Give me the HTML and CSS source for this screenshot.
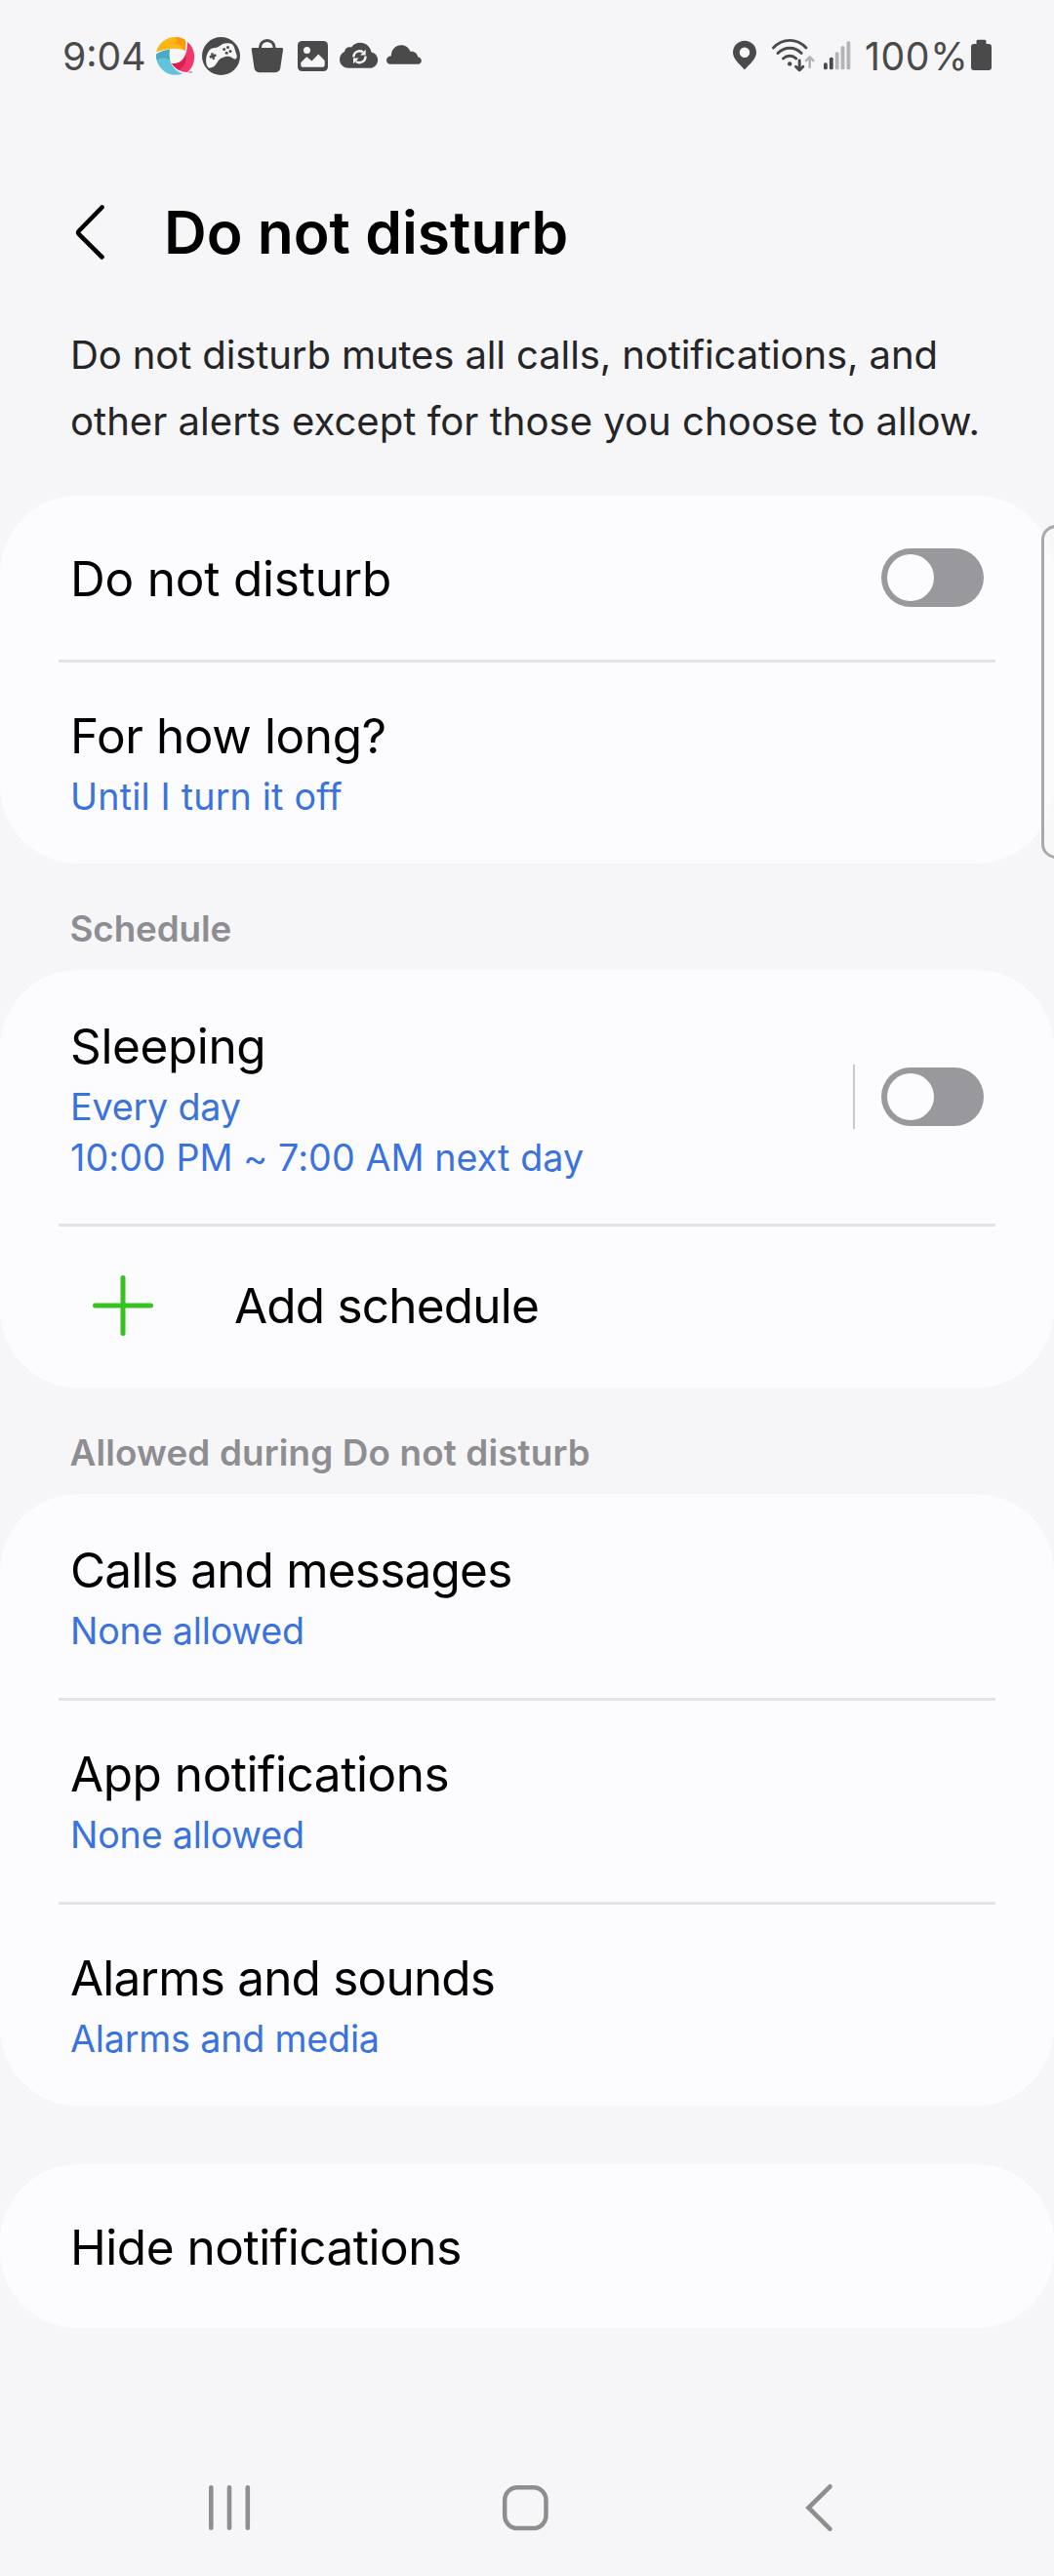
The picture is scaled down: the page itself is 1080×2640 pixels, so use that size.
FILE: index.html
```html
<!DOCTYPE html>
<html lang="en">
<head>
<meta charset="utf-8">
<title>Do not disturb</title>
<link rel="stylesheet" href="styles.css">
</head>
<body>
<div class="screen">
  <div class="status">
    <span class="time">9:04</span>
    <div class="tray">
      <svg class="ic" viewBox="0 0 40 40">
        <path fill="#fbb514" d="M.3 15.5C2 6 10.500 0 19.500 0c4.500 0 8.500 1.500 10.800 3.500L30 14c-5-2-9.500-2.500-14.500-2C10 12.500 4.500 13.500.3 15.500z"/>
        <path fill="#fb9a09" d="M19.500 0c4.500 0 8.500 1.500 10.800 3.500L30 14C27 9 23 7 17 6.500 22 5.500 22 3 19.500 0z"/>
        <path fill="#f0386f" d="M32 5c6 4.500 8.500 13 6.500 20.500C37.500 30 35 33.500 32 36c-6 0-12-3-16-9 7.500.5 12-3 14-9 1.500-4.500 2.300-8.500 2-13z"/>
        <path fill="#d9204f" d="M16 27c7.500.5 12-3 14-9 2 8-2 13-7 15.800C20.500 32.500 18 30 16 27z"/>
        <path fill="#63c3dc" d="M.1 17.500C5 14.500 9.500 13.200 14 12.800 12.500 20 14 27.500 19 32.500c2.500 2.500 5 4 8.500 5C20 40.500 10.500 38.500 5 32 1 27-.4 22.500.1 17.500z"/>
        <path fill="#4aa9c4" d="M.1 17.500C5 14.500 9.500 13.200 14 12.800c-.8 3.500-.8 7 .2 10.500C9 21 5 21 .6 23.500-.1 21-.1 19.500.1 17.500z"/>
        <path fill="#f0386f" d="M33.500 35.500h3.500v1h-3.500z"/>
      </svg>
      <svg class="ic" viewBox="0 0 40 40">
        <circle cx="19.500" cy="19.500" r="19.500" fill="#4a4a4a"/>
        <path fill="#f6f6f8" d="M7.300 31.700C3.500 30 3 21 6.200 15.500 7.500 12.500 10 11 14.500 10.800 18.500 10 20 6 25.500 6.200c4.500 0 6.500 1.300 7.500 4.300l2.700 8.500c.4 2.500-.7 4-2.700 3.500-2.500-1-3.500-2.700-6-2.700-3 0-4.500.5-8 2.200-3.500 2-4.500 9.700-11.700 9.700z"/>
        <path stroke="#4a4a4a" stroke-width="2.400" d="M7.800 20.500l6.600-2M10.100 16.300l2 6.500"/>
        <g fill="#4a4a4a"><circle cx="26.500" cy="10.600" r="1.500"/><circle cx="29" cy="14.500" r="1.500"/><circle cx="22.700" cy="12.500" r="1.500"/><circle cx="25.200" cy="16.300" r="1.500"/></g>
      </svg>
      <svg class="ic" viewBox="0 0 40 40">
        <path fill="none" stroke="#4a4a4a" stroke-width="3" d="M12.500 13v-2.300a7.300 7.300 0 0 1 14.600 0V13"/>
        <path fill="#4a4a4a" d="M5 11h29.800a1.300 1.300 0 0 1 1.300 1.600L33.300 31.500a5 5 0 0 1-5 4.700H11.500a5 5 0 0 1-5-4.700L3.700 12.600A1.300 1.300 0 0 1 5 11z"/>
      </svg>
      <svg class="ic" viewBox="0 0 40 40">
        <rect x="4" y="4" width="31" height="31" rx="4.500" fill="#4a4a4a"/>
        <circle cx="13.500" cy="13.500" r="3.500" fill="#f6f6f8"/>
        <path fill="#f6f6f8" d="M7.300 26l5.900-5.800 5.300 4.300 6.800-7 6.400 6.500v4.500c0 1.500-1 2.300-2.300 2.300H9.600c-1.300 0-2.300-.8-2.300-2.300z"/>
      </svg>
      <svg class="ic" viewBox="0 0 40 40">
        <path fill="#4a4a4a" d="M9.500 31.800C4 31.800 0 28 0 23c0-4 2-6.800 5-8 .5-3.500 3.500-5.500 7-4.500 2-3 5.500-4.700 9-4.700 6 0 10.500 4 11.500 9.700 4 .8 6.600 4 6.600 8 0 4.700-3.700 8.300-8.600 8.300z"/>
        <g fill="none" stroke="#f6f6f8" stroke-width="2.300"><path d="M14.300 20.500a6.200 6.200 0 0 1 9.600-5.200M26.500 19.500a6.200 6.200 0 0 1-9.800 5.500"/></g>
        <path fill="#f6f6f8" d="M26.700 12.800v5.700h-5.700zM14 27.200v-5.700h5.700z"/>
      </svg>
      <svg class="ic" viewBox="0 0 40 40">
        <path fill="#4a4a4a" d="M5 27.800c-2.500 0-4-1.700-4-4 0-2.600 1.800-4.300 4.800-4.600C6 12.500 10.500 8.200 16 8.200c4.500 0 8 2.600 9.500 6.600 4-.6 7.200 1.700 7.700 5.700 2.300.2 3.600 1.600 3.600 3.700s-1.400 3.600-3.600 3.600z"/>
      </svg>
    </div>
    <div class="radio">
      <svg class="pin" viewBox="0 0 24 40"><path fill="#4a4a4a" fill-rule="evenodd" d="M12 3.700a12 12 0 0 1 12 12c0 6.500-6 11-12 17.800C6 26.700 0 22.200 0 15.700a12 12 0 0 1 12-12zm0 6.800a5.200 5.200 0 1 0 0 10.400 5.200 5.200 0 0 0 0-10.400z"/></svg>
      <svg class="wifi" viewBox="0 0 46 40">
        <g fill="none" stroke="#4a4a4a" stroke-width="2.900" stroke-linecap="round" stroke-linejoin="round">
          <path d="M2.400 11C12 .8 26.500.8 36 11M7 16.500c7-7 17.500-7 24.200 0M12.500 22c4-3.700 9.500-3.700 13.300 0"/>
          <path d="M29.200 24v9.500M25.500 30.300l3.700 3.600 3.700-3.600"/>
        </g>
        <circle cx="19.200" cy="27.400" r="2.200" fill="#4a4a4a"/>
        <path fill="none" stroke="#b4b4b6" stroke-width="2.600" stroke-linecap="round" stroke-linejoin="round" d="M39.700 31v-10.500M36 24.200l3.700-3.700 3.700 3.700"/>
      </svg>
      <svg class="signal" viewBox="0 0 28 40">
        <g fill="#4a4a4a"><rect x="0" y="26.300" width="3.800" height="6.900" rx="1.500"/><rect x="5.900" y="20.700" width="3.800" height="12.500" rx="1.500"/></g>
        <g fill="#b4b4b6"><rect x="11.800" y="15.300" width="3.800" height="17.900" rx="1.500"/><rect x="17.600" y="9.300" width="3.800" height="23.900" rx="1.500"/><rect x="23.500" y="4.200" width="3.800" height="29" rx="1.500"/></g>
      </svg>
      <span class="pct">100%</span>
      <svg class="batt" viewBox="0 0 21 40"><path fill="#4a4a4a" d="M7 2.800h7a1.500 1.500 0 0 1 1.500 1.500V7H18a3 3 0 0 1 3 3v21a3 3 0 0 1-3 3H3a3 3 0 0 1-3-3V10a3 3 0 0 1 3-3h2.500V4.300A1.500 1.500 0 0 1 7 2.800z"/></svg>
    </div>
  </div>

  <header class="head">
    <svg class="back" viewBox="0 0 40 60"><path fill="none" stroke="#000" stroke-width="4.600" stroke-linecap="round" stroke-linejoin="round" d="M32.500 4.500L9 28.500Q7.300 30.300 9 32.100L32.500 55.500"/></svg>
    <h1>Do not disturb</h1>
  </header>
  <p class="desc"><span class="line1">Do not disturb mutes all calls, notifications, and</span><br>other alerts except for those you choose to allow.</p>

  <section class="card">
    <div class="row single"><span class="title even">Do not disturb</span><span class="toggle"></span></div>
    <div class="row"><div><div class="title snug">For how long?</div><div class="sub wide">Until I turn it off</div></div></div>
  </section>

  <h2>Schedule</h2>
  <section class="card">
    <div class="row tall"><div><div class="title snug">Sleeping</div><div class="sub"><span class="day">Every day</span><br><span class="hours">10:00 PM ~ 7:00 AM next day</span></div></div><div class="switch"><span class="toggle"></span></div></div>
    <div class="row add">
      <svg class="plus" viewBox="0 0 62 62"><path stroke="#36c21f" stroke-width="5" stroke-linecap="round" d="M31 2.500v57M2.500 31h57"/></svg>
      <span class="title tight">Add schedule</span>
    </div>
  </section>

  <h2 class="spaced">Allowed during Do not disturb</h2>
  <section class="card">
    <div class="row"><div><div class="title tight">Calls and messages</div><div class="sub">None allowed</div></div></div>
    <div class="row"><div><div class="title close">App notifications</div><div class="sub">None allowed</div></div></div>
    <div class="row"><div><div class="title tight">Alarms and sounds</div><div class="sub">Alarms and media</div></div></div>
  </section>

  <section class="card last">
    <div class="row single"><span class="title close">Hide notifications</span></div>
  </section>

  <nav class="nav">
    <svg viewBox="0 0 60 60"><path stroke="#8e8e8e" stroke-width="4.600" stroke-linecap="round" d="M11.300 9.300v41.400M30 9.300v41.400M48.800 9.300v41.400"/></svg>
    <svg viewBox="0 0 60 60"><rect x="9.200" y="9.200" width="42.300" height="41.900" rx="13" fill="none" stroke="#8e8e8e" stroke-width="4.500"/></svg>
    <svg viewBox="0 0 60 60"><path fill="none" stroke="#8e8e8e" stroke-width="4.600" stroke-linecap="round" d="M40.500 8.300L18.500 30l22 21.800"/></svg>
  </nav>
  <div class="edge"></div>
</div>
</body>
</html>
```
FILE: styles.css
```css
* { box-sizing: border-box; }
body {
  margin: 0;
  background: #f6f6f8;
  color: #000;
  font-family: Inter, "Liberation Sans", sans-serif;
}
svg { display: block; flex: none; }
.screen {
  position: relative;
  width: 1080px;
  height: 2640px;
  overflow: hidden;
  display: flex;
  flex-direction: column;
}

/* status bar */
.status {
  height: 78px;
  padding: 38px 64px 0 64px;
  display: flex;
  color: #4a4a4a;
  font-size: 39.2px;
  font-weight: 370;
  line-height: 39px;
}
.time { width: 96px; white-space: nowrap; }
.tray { display: flex; gap: 7px; }
.ic { width: 40px; height: 40px; }
.radio { display: flex; margin-left: auto; }
.pin { width: 24px; height: 40px; margin-right: 15px; }
.wifi { width: 46px; height: 40px; margin-right: 8px; }
.signal { width: 28px; height: 40px; }
.pct { width: 109px; margin-left: 14px; white-space: nowrap; letter-spacing: .6px; }
.batt { width: 21px; height: 40px; }

/* heading */
.head {
  height: 252px;
  padding: 68px 72px 0;
  display: flex;
  align-items: center;
}
.back { width: 40px; height: 60px; margin-right: 56px; }
h1 {
  margin: 0;
  font-size: 60.5px;
  font-weight: 600;
  line-height: 80px;
  white-space: nowrap;
}
.desc {
  margin: 0;
  height: 178px;
  padding-left: 72px;
  font-size: 40.1px;
  line-height: 68px;
  color: #252528;
  white-space: nowrap;
}
.line1 { letter-spacing: -.14px; }

/* cards */
.card { background: #fcfcfe; border-radius: 80px; }
.last { margin-top: 60px; }
.row {
  height: 206px;
  padding: 42px 72px 0;
  display: flex;
  align-items: flex-start;
  justify-content: space-between;
}
.row:first-child { height: 209px; padding-top: 45px; }
.row + .row {
  height: 209px;
  border-top: 3px solid #e3e4e6;
  margin: 0 60px;
  padding-left: 12px;
  padding-right: 12px;
}
.row.single,
.row.single:first-child { height: 168px; padding-top: 0; align-items: center; }
.row.single .title { padding-top: 2px; }
.row.tall:first-child { height: 260px; }
.row + .row.add {
  height: 168px;
  padding: 0 0 3px 35px;
  align-items: center;
  justify-content: flex-start;
}
.plus { width: 62px; height: 62px; margin-right: 83px; }
.title { font-size: 49.5px; line-height: 66px; white-space: nowrap; }
.sub {
  margin-top: 3px;
  font-size: 37.7px;
  line-height: 52px;
  letter-spacing: -.2px;
  color: #3a72de;
  white-space: nowrap;
}
.day { letter-spacing: -.2px; }
.hours { letter-spacing: .06px; }
.even { letter-spacing: -.2px; }
.snug { letter-spacing: -.38px; }
.close { letter-spacing: -.46px; }
.tight { letter-spacing: -.8px; }
.wide { letter-spacing: .18px; }
h2 {
  margin: 0;
  height: 109px;
  padding: 41px 0 0 71.5px;
  font-size: 36.8px;
  font-weight: 600;
  line-height: 52px;
  letter-spacing: -.1px;
  color: #8e8d92;
  white-space: nowrap;
}
.spaced { letter-spacing: .15px; }
.toggle {
  width: 105px;
  height: 60px;
  padding: 6px;
  border-radius: 30px;
  background: #99989d;
}
.toggle::before {
  content: "";
  display: block;
  width: 48px;
  height: 48px;
  border-radius: 50%;
  background: #fcfcfe;
}
.switch {
  height: 66px;
  margin-top: 52px;
  padding-left: 27px;
  border-left: 2px solid #c8c8cc;
  display: flex;
  align-items: center;
}

/* navigation bar */
.nav {
  margin-top: auto;
  height: 140px;
  padding: 0 210px 0 205px;
  display: flex;
  justify-content: space-between;
  align-items: center;
}
.nav svg { width: 60px; height: 60px; }

/* edge panel handle, lies over the first card */
.edge {
  position: absolute;
  left: 1067px;
  top: 538px;
  width: 30px;
  height: 342px;
  border: 3px solid #a9a9a9;
  border-radius: 15px;
  background: rgba(250, 250, 250, .6);
}
```
